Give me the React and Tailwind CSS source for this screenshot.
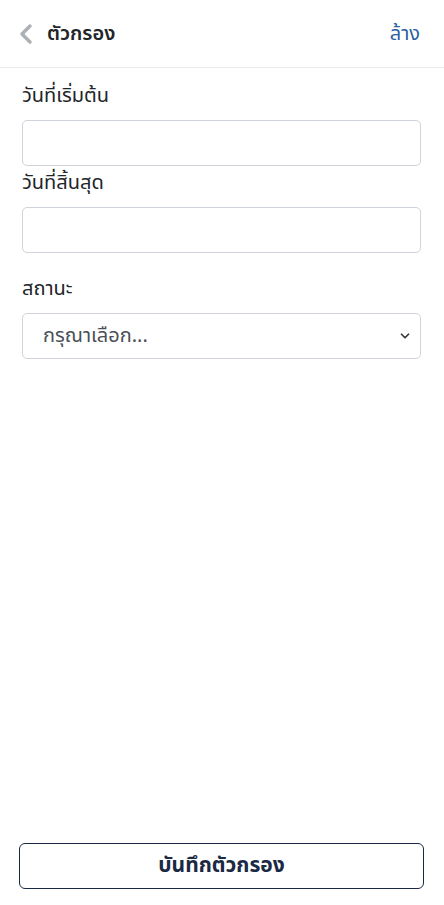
import { ChevronLeft, ChevronDown } from "lucide-react";

const font = { fontFamily: '"Noto Sans Thai", "Noto Sans", "Liberation Sans", sans-serif' };

function Field({ label, className = "", children }) {
  return (
    <div className={className}>
      <label className="block h-[28px] leading-[28px] text-[20px] text-[#212529] mb-[10px]">
        {label}
      </label>
      {children}
    </div>
  );
}

export default function App() {
  return (
    <div className="h-[905px] w-full bg-white flex flex-col" style={font}>
      {/* Header */}
      <div className="h-[68px] border-b border-[#e9ecef] flex items-center pl-[10px] pr-[14px] shrink-0">
        <ChevronLeft size={32} strokeWidth={2.6} className="text-[#adb1b5] mt-[1px]" />
        <span className="ml-[5px] text-[20px] font-semibold text-[#212529] mt-[1px]">ตัวกรอง</span>
        <span className="ml-auto mr-[10px] text-[20px] text-[#2c5fa3] mt-[1px]">ล้าง</span>
      </div>

      {/* Body */}
      <div className="pl-[22px] pr-[23px] pt-[14px] flex-1">
        <Field label="วันที่เริ่มต้น">
          <input className="block w-full h-[46px] rounded-[5px] border border-[#ced4da] bg-white px-3" />
        </Field>
        <Field label="วันที่สิ้นสุด" className="mt-[3px]">
          <input className="block w-full h-[46px] rounded-[5px] border border-[#ced4da] bg-white px-3" />
        </Field>
        <Field label="สถานะ" className="mt-[22px]">
          <div className="relative">
            <select
              defaultValue=""
              className="block w-full h-[46px] appearance-none rounded-[5px] border border-[#ced4da] bg-white pl-[20px] pr-10 text-[20px] text-[#495057]"
              style={font}
            >
              <option value="">กรุณาเลือก...</option>
            </select>
            <ChevronDown
              size={14}
              strokeWidth={3}
              className="absolute right-[9px] top-[16px] text-[#343a40] pointer-events-none"
            />
          </div>
        </Field>
      </div>

      {/* Footer */}
      <div className="pl-[19px] pr-[20px] pb-[16px] shrink-0">
        <button className="w-full h-[46px] rounded-[6px] border border-[#1b2a44] bg-white text-[21px] font-bold text-[#1b2a44]">
          บันทึกตัวกรอง
        </button>
      </div>
    </div>
  );
}
